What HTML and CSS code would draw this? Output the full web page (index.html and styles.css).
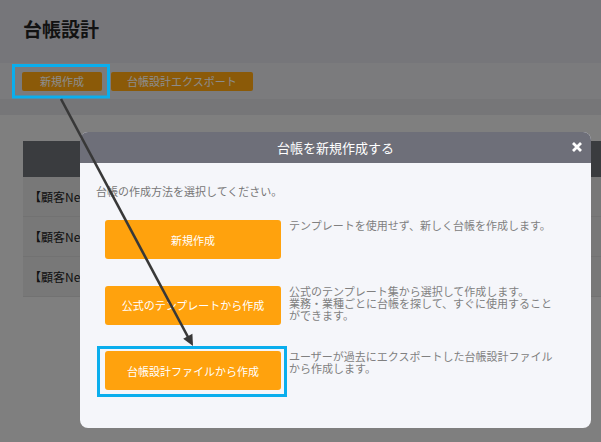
FILE: index.html
```html
<!DOCTYPE html>
<html lang="ja">
<head>
<meta charset="utf-8">
<title>台帳設計</title>
<link rel="stylesheet" href="styles.css">
</head>
<body>
<div class="page">
  <header class="page-head">
    <h1 class="page-title">台帳設計</h1>
  </header>
  <div class="toolbar">
    <button class="tool-btn tool-btn-new">新規作成</button>
    <button class="tool-btn">台帳設計エクスポート</button>
  </div>
  <div class="strip"></div>
  <main class="content">
    <div class="table">
      <div class="table-head"></div>
      <div class="table-row"><span class="cell-name">【顧客New】顧客管理台帳</span></div>
      <div class="table-row"><span class="cell-name">【顧客New】案件管理台帳</span></div>
      <div class="table-row"><span class="cell-name">【顧客New】問い合わせ台帳</span></div>
    </div>
  </main>
</div>

<div class="overlay"></div>

<div class="modal" role="dialog">
  <div class="modal-head">
    <span class="modal-title">台帳を新規作成する</span>
    <svg class="modal-close" width="10" height="10" viewBox="0 0 10 10" aria-label="閉じる">
      <path d="M1 1 L9 9 M9 1 L1 9" stroke="#fff" stroke-width="2.8" stroke-linecap="butt"/>
    </svg>
  </div>
  <div class="modal-body">
    <p class="intro">台帳の作成方法を選択してください。</p>
    <div class="option">
      <button class="opt-btn">新規作成</button>
      <p class="opt-desc">テンプレートを使用せず、新しく台帳を作成します。</p>
    </div>
    <div class="option">
      <button class="opt-btn">公式のテンプレートから作成</button>
      <p class="opt-desc">公式のテンプレート集から選択して作成します。<br>業務・業種ごとに台帳を探して、すぐに使用することができます。</p>
    </div>
    <div class="option">
      <button class="opt-btn">台帳設計ファイルから作成</button>
      <p class="opt-desc">ユーザーが過去にエクスポートした台帳設計ファイルから作成します。</p>
    </div>
  </div>
</div>

<svg class="annotations" width="601" height="442" viewBox="0 0 601 442">
  <rect x="13.5" y="65.5" width="95" height="31.5" fill="none" stroke="#0aaeed" stroke-width="3"/>
  <rect x="98.5" y="347.5" width="187" height="48" fill="none" stroke="#0aaeed" stroke-width="3"/>
  <line x1="61" y1="99" x2="188" y2="337" stroke="#383838" stroke-width="2.6"/>
  <polygon points="193,346 192.4,333.8 183.2,338.7" fill="#383838"/>
</svg>
</body>
</html>
```

FILE: styles.css
```css
html, body {
  margin: 0;
  padding: 0;
}

body {
  width: 601px;
  height: 442px;
  overflow: hidden;
  position: relative;
  font-family: "Noto Sans CJK JP", "Noto Sans", sans-serif;
  background: #e7e7e7;
}

.page {
  display: flex;
  flex-direction: column;
}

.page-head {
  height: 63px;
  background: #d8d8de;
  padding-left: 23px;
  display: flex;
  align-items: center;
  box-sizing: border-box;
}

.page-title {
  margin: 0;
  font-size: 19px;
  font-weight: bold;
  color: #222;
  line-height: 1;
  position: relative;
  top: -3px;
}

.toolbar {
  height: 36px;
  background: #e0e0e3;
  box-sizing: border-box;
  padding: 9px 0 0 22px;
  display: flex;
  align-items: flex-start;
  gap: 9px;
}

.tool-btn {
  height: 19px;
  border: none;
  border-radius: 2px;
  background: #fda40f;
  color: #fff;
  font-family: inherit;
  font-size: 11px;
  line-height: 19px;
  padding: 0 16px;
  min-width: 80px;
  margin: 0;
}

.strip {
  height: 16px;
  background: #d7d7da;
}

.content {
  padding: 26px 0 0 23px;
}

.table-head {
  height: 36px;
  background: #6b6d74;
}

.table-row {
  height: 40px;
  box-sizing: border-box;
  background: #dadada;
  border-bottom: 1px solid #d0d0d0;
  padding-left: 6px;
  font-size: 12px;
  line-height: 40px;
  color: #222;
  white-space: nowrap;
}

.cell-name {
  display: inline-block;
  max-width: 51px;
  overflow: hidden;
  vertical-align: top;
}

.overlay {
  position: absolute;
  inset: 0;
  background: rgba(0, 0, 0, 0.45);
}

.modal {
  position: absolute;
  left: 80px;
  top: 132px;
  width: 511px;
  height: 296px;
  border-radius: 8px;
  overflow: hidden;
  background: #f5f6fa;
  display: flex;
  flex-direction: column;
}

.modal-head {
  height: 31px;
  background: #6e6f79;
  display: flex;
  align-items: center;
  justify-content: center;
  position: relative;
  flex-shrink: 0;
}

.modal-title {
  color: #fff;
  font-size: 13px;
  line-height: 1;
}

.modal-close {
  position: absolute;
  right: 9px;
  top: 10px;
}

.modal-body {
  padding: 20px 0 0 16px;
}

.intro {
  margin: 0;
  font-size: 11px;
  line-height: 16px;
  color: #777;
}

.option {
  display: flex;
  align-items: flex-start;
  gap: 8px;
  margin-left: 9px;
  margin-top: 26.5px;
}

.intro + .option {
  margin-top: 21px;
}

.opt-btn {
  width: 176px;
  height: 39px;
  flex-shrink: 0;
  border: none;
  border-radius: 3px;
  background: #ffa20d;
  color: #fff;
  font-family: inherit;
  font-size: 11px;
  margin: 0;
  padding: 0;
}

.opt-desc {
  margin: -1px 0 0 0;
  width: 270px;
  font-size: 11px;
  line-height: 12px;
  color: #808080;
}

.annotations {
  position: absolute;
  left: 0;
  top: 0;
  pointer-events: none;
}
```
